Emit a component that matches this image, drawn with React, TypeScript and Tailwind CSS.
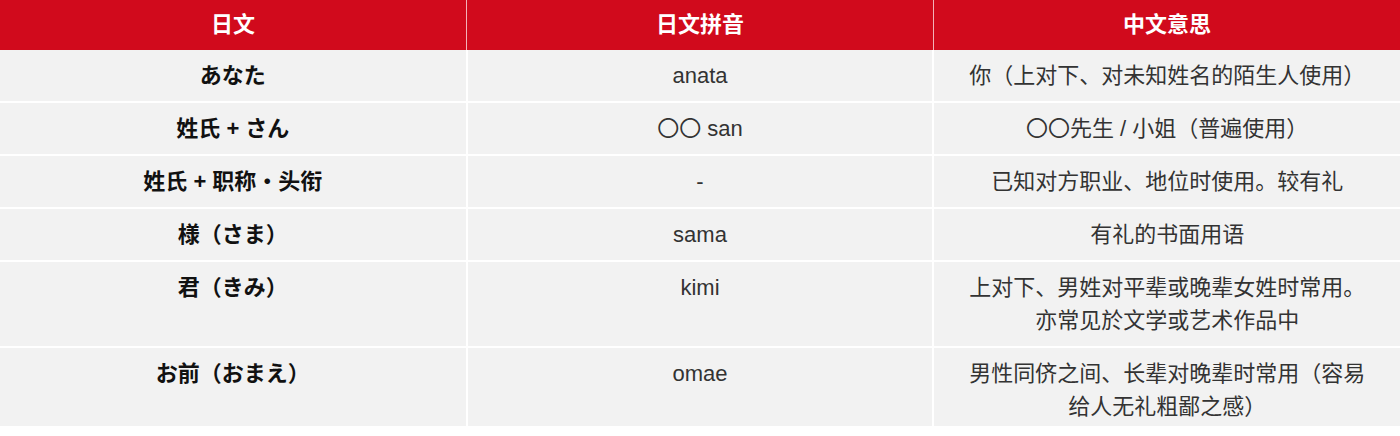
const rows = [
  { ja: "あなた", romaji: "anata", zh: ["你（上对下、对未知姓名的陌生人使用）"] },
  { ja: "姓氏 + さん", romaji: "〇〇 san", zh: ["〇〇先生 / 小姐（普遍使用）"] },
  { ja: "姓氏 + 职称・头衔", romaji: "-", zh: ["已知对方职业、地位时使用。较有礼"] },
  { ja: "様（さま）", romaji: "sama", zh: ["有礼的书面用语"] },
  {
    ja: "君（きみ）",
    romaji: "kimi",
    zh: ["上对下、男姓对平辈或晚辈女姓时常用。", "亦常见於文学或艺术作品中"],
  },
  {
    ja: "お前（おまえ）",
    romaji: "omae",
    zh: ["男性同侪之间、长辈对晚辈时常用（容易", "给人无礼粗鄙之感）"],
  },
];

export default function App() {
  return (
    <div className="w-[1400px] h-[436px] bg-white font-['Liberation_Sans','Noto_Sans_CJK_SC',sans-serif] text-[22px]">
      <table className="w-full table-fixed border-collapse">
        <thead>
          <tr className="bg-[#d10a1c] text-white font-bold">
            <th className="h-[50px] border-r border-[#f3b3b8] leading-[50px] align-middle">日文</th>
            <th className="h-[50px] border-r border-[#f3b3b8] leading-[50px] align-middle">日文拼音</th>
            <th className="h-[50px] leading-[50px] align-middle">中文意思</th>
          </tr>
        </thead>
        <tbody>
          {rows.map((r, i) => {
            const last = i === rows.length - 1;
            const pad = last ? "pt-[9px] pb-[3px]" : "py-[9px]";
            return (
              <tr key={r.romaji} className="bg-[#f2f2f2] border-b-2 border-white">
                <td className={`${pad} leading-[33px] align-top text-center font-bold text-[#111] border-r-2 border-white`}>
                  {r.ja}
                </td>
                <td className={`${pad} leading-[33px] align-top text-center text-[#333] border-r-2 border-white`}>
                  {r.romaji}
                </td>
                <td className={`${pad} leading-[33px] align-top text-center text-[#333]`}>
                  {r.zh.map((line) => (
                    <div key={line}>{line}</div>
                  ))}
                </td>
              </tr>
            );
          })}
        </tbody>
      </table>
    </div>
  );
}
